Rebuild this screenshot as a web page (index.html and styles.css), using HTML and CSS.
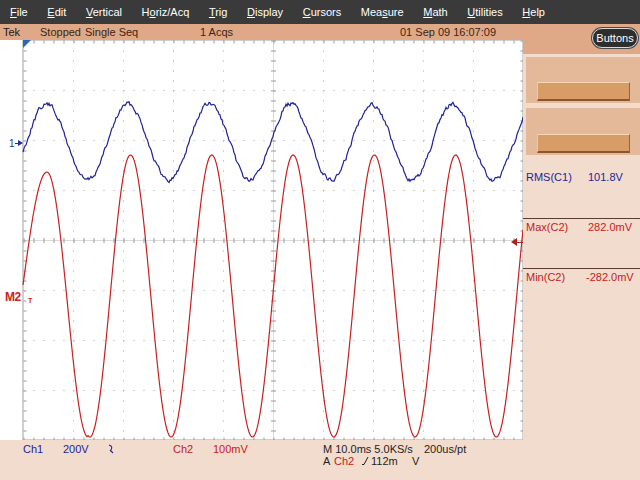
FILE: index.html
```html
<!DOCTYPE html>
<html>
<head>
<meta charset="utf-8">
<title>Tek</title>
<link rel="stylesheet" href="styles.css">
</head>
<body>
<div class="screen">
  <nav class="menubar">
    <span class="menu"><u>F</u>ile</span>
    <span class="menu"><u>E</u>dit</span>
    <span class="menu"><u>V</u>ertical</span>
    <span class="menu">H<u>o</u>riz/Acq</span>
    <span class="menu"><u>T</u>rig</span>
    <span class="menu"><u>D</u>isplay</span>
    <span class="menu"><u>C</u>ursors</span>
    <span class="menu">Mea<u>s</u>ure</span>
    <span class="menu"><u>M</u>ath</span>
    <span class="menu"><u>U</u>tilities</span>
    <span class="menu"><u>H</u>elp</span>
  </nav>
  <div class="workspace">
    <div class="scope">
      <div class="status">
        <span class="tek">Tek</span>
        <span>Stopped</span>
        <span>Single Seq</span>
        <span>1 Acqs</span>
        <span>01 Sep 09 16:07:09</span>
      </div>
      <svg class="plot" width="523" height="400" viewBox="0 0 523 400" xmlns="http://www.w3.org/2000/svg">
        <g transform="translate(23.5,0.5)">
          <g class="grid">
            <line x1="50" y1="0" x2="50" y2="400"/>
            <line x1="100" y1="0" x2="100" y2="400"/>
            <line x1="150" y1="0" x2="150" y2="400"/>
            <line x1="200" y1="0" x2="200" y2="400"/>
            <line x1="300" y1="0" x2="300" y2="400"/>
            <line x1="350" y1="0" x2="350" y2="400"/>
            <line x1="400" y1="0" x2="400" y2="400"/>
            <line x1="450" y1="0" x2="450" y2="400"/>
            <line x1="0" y1="50" x2="500" y2="50"/>
            <line x1="0" y1="100" x2="500" y2="100"/>
            <line x1="0" y1="150" x2="500" y2="150"/>
            <line x1="0" y1="250" x2="500" y2="250"/>
            <line x1="0" y1="300" x2="500" y2="300"/>
            <line x1="0" y1="350" x2="500" y2="350"/>
          </g>
          <g class="axis">
            <line x1="250" y1="0" x2="250" y2="400"/>
            <line x1="0" y1="200" x2="500" y2="200"/>
          </g>
          <g class="ticks">
            <line x1="250" y1="0" x2="250" y2="400"/>
            <line x1="0" y1="200" x2="500" y2="200"/>
            <line x1="1.5" y1="0" x2="1.5" y2="400" class="edge-v"/>
            <line x1="498.5" y1="0" x2="498.5" y2="400" class="edge-v"/>
            <line x1="0" y1="1.5" x2="500" y2="1.5" class="edge-h"/>
            <line x1="0" y1="398.5" x2="500" y2="398.5" class="edge-h"/>
          </g>
          <rect class="frame" x="-0.5" y="-0.5" width="500" height="400"/>
        </g>
        <path id="ch2" class="trace-red" d=""/>
        <path id="ch1" class="trace-blue" d=""/>
        <polygon class="trig-pos" points="23,0 31,0 23,8"/>
        <text class="mark-blue" x="9" y="107">1</text>
        <polygon class="mark-blue-fill" points="18,100 23,103 18,106"/>
        <line class="mark-blue-line" x1="15" y1="103.5" x2="19" y2="103.5"/>
        <text class="mark-red" x="5" y="261">M2</text>
        <text class="mark-red-small" x="28" y="263">T</text>
        <polygon class="trig-level" points="511,202 517,198 517,206"/>
        <line class="trig-level-line" x1="516" y1="202.5" x2="523" y2="202.5"/>
      </svg>
    </div>
    <aside class="side">
      <div class="side-head"><span class="tab">Buttons</span></div>
      <div class="softbox first"><span class="softbtn"></span></div>
      <div class="softbox second"><span class="softbtn"></span></div>
      <div class="meas">
        <div class="meas-row blue"><span>RMS(C1)</span><span>101.8V</span></div>
        <div class="meas-row red"><span>Max(C2)</span><span>282.0mV</span></div>
        <div class="meas-row red last"><span>Min(C2)</span><span class="neg">-282.0mV</span></div>
      </div>
    </aside>
  </div>
  <footer class="bottom">
    <div class="chans">
      <span class="blue">Ch1</span>
      <span class="blue">200V</span>
      <span class="blue"><svg class="bw" width="7" height="10" viewBox="0 0 7 10"><path d="M1 1 C4 2 5 4 2 7 M2 6 L5 9"/></svg></span>
      <span class="red">Ch2</span>
      <span class="red">100mV</span>
    </div>
    <div class="timebase">
      <div class="tb-row1"><span>M 10.0ms 5.0KS/s</span><span>200us/pt</span></div>
      <div class="tb-row2"><span>A</span><span class="red">Ch2</span><span><svg class="slope" width="8" height="10" viewBox="0 0 8 10"><polyline points="0,8.5 2,8.5 6,1"/></svg></span><span>112m</span><span>V</span></div>
    </div>
  </footer>
</div>
<script src="script.js"></script>
</body>
</html>
```

FILE: styles.css
```css
html, body {
  margin: 0;
  padding: 0;
}
body {
  width: 640px;
  height: 480px;
  overflow: hidden;
  font-family: "Liberation Sans", Arial, sans-serif;
  font-size: 11px;
  background: #f2dccd;
}
.screen {
  width: 640px;
  height: 480px;
  display: flex;
  flex-direction: column;
}
.menubar {
  height: 24px;
  flex: none;
  background: #3a3a3a;
  color: #ffffff;
  display: flex;
  align-items: center;
  gap: 19.6px;
  padding-left: 10px;
  font-size: 11px;
}
.menu u {
  text-decoration: underline;
  text-underline-offset: 1px;
}
.workspace {
  display: flex;
  height: 416px;
  flex: none;
}
.scope {
  width: 523px;
  display: flex;
  flex-direction: column;
}
.status {
  height: 16px;
  background: #dfa987;
  color: #3e2412;
  display: grid;
  grid-template-columns: 37px 45px 115px 200px auto;
  padding-left: 3px;
  line-height: 16px;
  white-space: nowrap;
}
.status .tek {
  color: #1a1a1a;
}
.plot {
  display: block;
  width: 523px;
  height: 400px;
  background: #ffffff;
}
.grid line {
  stroke: #a4a4a4;
  stroke-width: 1;
  stroke-dasharray: 1 9;
}
.axis line {
  stroke: #b4b4b4;
  stroke-width: 1;
  stroke-dasharray: 1 1;
}
.ticks line {
  stroke: #9a9a9a;
  stroke-width: 5;
  stroke-dasharray: 1 9;
}
.ticks .edge-v,
.ticks .edge-h {
  stroke-width: 3;
}
.frame {
  fill: none;
  stroke: #a0a0a0;
  stroke-width: 1;
}
.trace-red {
  fill: none;
  stroke: #c82020;
  stroke-width: 1.2;
}
.trace-blue {
  fill: none;
  stroke: #1e2296;
  stroke-width: 1.2;
}
.trig-pos {
  fill: #2c64c8;
}
.mark-blue {
  fill: #2a2a9a;
  font-family: "Liberation Sans", Arial, sans-serif;
  font-size: 10px;
}
.mark-blue-fill {
  fill: #2a2a9a;
}
.mark-blue-line {
  stroke: #2a2a9a;
  stroke-width: 1;
}
.mark-red {
  fill: #d02020;
  font-family: "Liberation Sans", Arial, sans-serif;
  font-size: 12px;
  font-weight: bold;
  letter-spacing: -0.5px;
}
.mark-red-small {
  fill: #d02020;
  font-family: "Liberation Sans", Arial, sans-serif;
  font-size: 7px;
  font-weight: bold;
}
.trig-level {
  fill: #b02020;
}
.trig-level-line {
  stroke: #b02020;
  stroke-width: 1;
}
.side {
  width: 117px;
  background: #f2dccd;
  display: flex;
  flex-direction: column;
}
.side-head {
  height: 30px;
  background: #dfa987;
  display: flex;
  justify-content: flex-end;
  align-items: flex-start;
  padding: 4px 2px 0 0;
  box-sizing: border-box;
}
.tab {
  width: 46px;
  height: 20px;
  box-sizing: border-box;
  background: #2e2e2e;
  color: #ffffff;
  border: 1px solid #d8d8d8;
  box-shadow: 0 0 0 1px #4a4a4a;
  border-radius: 10px;
  display: flex;
  align-items: center;
  justify-content: center;
  font-size: 11px;
}
.softbox {
  margin-left: 3px;
  background: #e4b999;
  display: flex;
  align-items: flex-start;
}
.softbox.first {
  margin-top: 3px;
  height: 46px;
}
.softbox.second {
  margin-top: 5px;
  height: 47px;
}
.softbtn {
  width: 93px;
  height: 19px;
  margin-left: 11px;
  margin-top: 25px;
  box-sizing: border-box;
  background: #d89c66;
  border-top: 1px solid #f7d8b6;
  border-left: 1px solid #f0c9a2;
  border-right: 1px solid #9a6438;
  border-bottom: 2px solid #8a5630;
}
.softbox.second .softbtn {
  margin-top: 26px;
}
.meas {
  margin-top: 14px;
}
.meas-row {
  height: 50px;
  box-sizing: border-box;
  border-bottom: 1px solid #5c3c2c;
  padding: 2px 0 0 3px;
  display: grid;
  grid-template-columns: 62px auto;
  align-content: start;
  line-height: 13px;
  white-space: nowrap;
}
.meas-row.last {
  border-bottom: none;
}
.meas-row .neg {
  margin-left: -2px;
}
.blue {
  color: #24249a;
}
.red {
  color: #c42222;
}
.bottom {
  height: 40px;
  flex: none;
  background: #f2dccd;
  display: flex;
  padding-top: 3px;
  box-sizing: border-box;
  color: #1e1e1e;
  line-height: 12px;
  white-space: nowrap;
}
.chans {
  width: 300px;
  padding-left: 23px;
  display: grid;
  grid-template-columns: 40px 45px 65px 40px auto;
  align-content: start;
}
.bw {
  display: inline-block;
  vertical-align: -1px;
}
.bw path {
  fill: none;
  stroke: #24249a;
  stroke-width: 1.1;
}
.timebase {
  display: flex;
  flex-direction: column;
}
.tb-row1 {
  display: grid;
  grid-template-columns: 101px auto;
}
.tb-row2 {
  display: grid;
  grid-template-columns: 11px 28px 9px 41px auto;
}
.slope {
  display: inline-block;
  vertical-align: -1px;
}
.slope polyline {
  fill: none;
  stroke: #1e1e1e;
  stroke-width: 1;
}
```

FILE: script.js
```js
(function () {
  function rng(seed) {
    var s = seed;
    return function () {
      s = (s * 1103515245 + 12345) & 0x7fffffff;
      return s / 0x7fffffff;
    };
  }
  function redY(x) {
    if (x < 47) {
      return 132 + 113 * (1 - Math.cos((47 - x) / 24 * Math.PI / 2));
    }
    if (x < 88) {
      return 264.5 - 132.5 * Math.cos(Math.PI * (x - 47) / 41);
    }
    return 256 - 141 * Math.cos(2 * Math.PI * (x - 130.5) / 81.3);
  }
  function blueY(x) {
    return 102 - 38 * Math.cos(2 * Math.PI * (x - 128) / 81.3);
  }
  function build(id, fn, noise, seed) {
    var r = rng(seed);
    var n = 0;
    var d = '';
    for (var x = 23; x <= 523; x += 1) {
      var y = fn(x);
      if (noise) {
        n = 0.55 * n + 0.45 * (r() - 0.5) * 4 * noise;
        y += n;
      }
      d += (x === 23 ? 'M' : 'L') + x + ' ' + y.toFixed(1);
    }
    document.getElementById(id).setAttribute('d', d);
  }
  build('ch2', redY, 0, 1);
  build('ch1', blueY, 2.2, 7);
})();
```
